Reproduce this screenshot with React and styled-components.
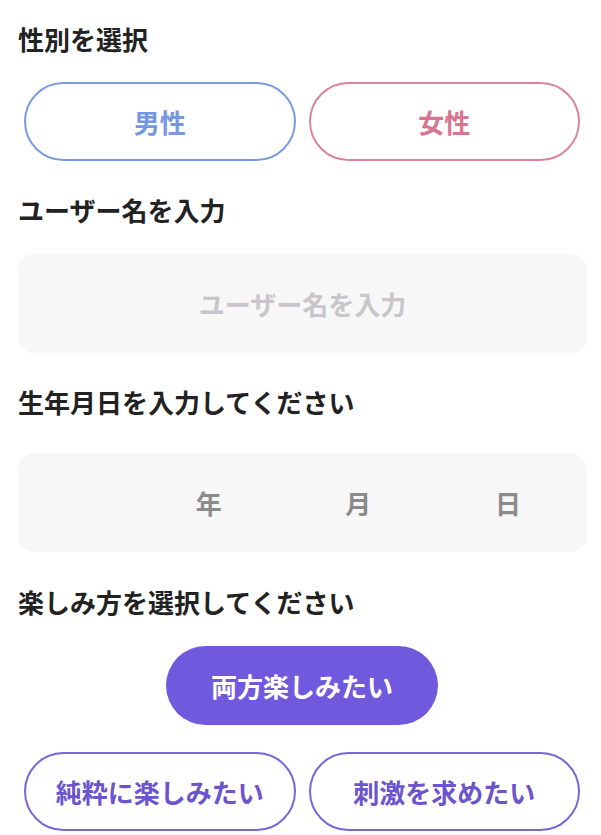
import React, { useState } from 'react';
import styled, { createGlobalStyle } from 'styled-components';

const GlobalStyle = createGlobalStyle`
  body {
    margin: 0;
    background: #ffffff;
    font-family: "Noto Sans CJK JP", "Noto Sans", sans-serif;
  }
`;

const Page = styled.div`
  width: 601px;
  padding: 26px 0 0 0;
  box-sizing: border-box;
`;

const Label = styled.div`
  padding-left: 18px;
  margin-top: ${(p) => p.$top || 0}px;
  font-size: 26px;
  line-height: 26px;
  font-weight: 700;
  color: #222222;
`;

const ButtonRow = styled.div`
  display: flex;
  justify-content: ${(p) => (p.$center ? 'center' : 'flex-start')};
  gap: 13px;
  width: 556px;
  margin-left: 24px;
  margin-top: ${(p) => p.$top || 0}px;
`;

const Pill = styled.button`
  width: 272px;
  height: 79px;
  box-sizing: border-box;
  border-radius: 40px;
  border: ${(p) => (p.$filled ? 'none' : `2px solid ${p.$border}`)};
  background: ${(p) => (p.$filled ? p.$border : '#ffffff')};
  color: ${(p) => p.$color};
  font-family: inherit;
  font-size: 26px;
  font-weight: 700;
  padding: 0;
  cursor: pointer;
`;

const Field = styled.div`
  margin: ${(p) => p.$top || 0}px 14px 0 18px;
  height: 99px;
  border-radius: 16px;
  background: #f7f7f7;
  display: flex;
  align-items: center;
  justify-content: center;
`;

const NameInput = styled.input`
  width: 100%;
  height: 100%;
  border: none;
  background: transparent;
  text-align: center;
  font-family: inherit;
  font-size: 26px;
  font-weight: 700;
  color: #333333;
  outline: none;
  &::placeholder {
    color: #c8c6ca;
  }
`;

const DateGrid = styled.div`
  width: 100%;
  display: grid;
  grid-template-columns: repeat(3, 1fr);
  padding: 0 66px 0 54px;
  box-sizing: border-box;
`;

const DatePart = styled.div`
  display: flex;
  justify-content: flex-end;
  align-items: center;
  font-size: 26px;
  font-weight: 700;
  color: #8b8b8d;
`;

const blue = '#7b9be1';
const pink = '#d8849a';
const purple = '#7159dd';

const App = () => {
  const [gender, setGender] = useState(null);
  const [mode, setMode] = useState('both');

  return (
    <Page>
      <GlobalStyle />
      <Label>性別を選択</Label>
      <ButtonRow $top={30}>
        <Pill $border={blue} $color="#7596e0" onClick={() => setGender('m')}>
          男性
        </Pill>
        <Pill $border={pink} $color="#d8758f" onClick={() => setGender('f')}>
          女性
        </Pill>
      </ButtonRow>

      <Label $top={36}>ユーザー名を入力</Label>
      <Field $top={31}>
        <NameInput placeholder="ユーザー名を入力" />
      </Field>

      <Label $top={36}>生年月日を入力してください</Label>
      <Field $top={38}>
        <DateGrid>
          <DatePart>年</DatePart>
          <DatePart>月</DatePart>
          <DatePart>日</DatePart>
        </DateGrid>
      </Field>

      <Label $top={37}>楽しみ方を選択してください</Label>
      <ButtonRow $top={31} $center>
        <Pill $filled $border={purple} $color="#ffffff" onClick={() => setMode('both')}>
          両方楽しみたい
        </Pill>
      </ButtonRow>
      <ButtonRow $top={27}>
        <Pill $border="#7b66d9" $color="#6c54cd" onClick={() => setMode('pure')}>
          純粋に楽しみたい
        </Pill>
        <Pill $border="#7b66d9" $color="#6c54cd" onClick={() => setMode('thrill')}>
          刺激を求めたい
        </Pill>
      </ButtonRow>
    </Page>
  );
};

export default App;
